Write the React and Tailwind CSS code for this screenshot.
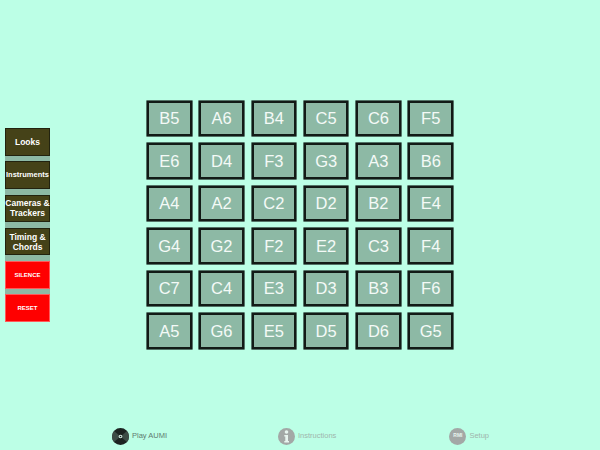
import React from "react";

const rows = [
  ["B5", "A6", "B4", "C5", "C6", "F5"],
  ["E6", "D4", "F3", "G3", "A3", "B6"],
  ["A4", "A2", "C2", "D2", "B2", "E4"],
  ["G4", "G2", "F2", "E2", "C3", "F4"],
  ["C7", "C4", "E3", "D3", "B3", "F6"],
  ["A5", "G6", "E5", "D5", "D6", "G5"],
];

const SideButton = ({ children, red, size = "text-[8.5px]" }) => (
  <button
    className={`w-full h-[27.5px] flex items-center justify-center text-center font-bold text-white leading-[10px] whitespace-nowrap border-[0.5px] ${size} ${
      red ? "bg-[#ff0000] border-[#ff5a5a]" : "bg-[#454218] border-[#22230f]"
    }`}
  >
    <span>{children}</span>
  </button>
);

const DiscIcon = () => (
  <svg width="17" height="17" viewBox="0 0 17 17">
    <circle cx="8.5" cy="8.5" r="8.5" fill="#1c2421" />
    <path d="M8.5 8.5 L2 3 A8.5 8.5 0 0 0 2 14 Z" fill="#3d4d46" />
    <path d="M8.5 8.5 L15 3 A8.5 8.5 0 0 1 15 14 Z" fill="#3d4d46" />
    <circle cx="8.5" cy="8.5" r="1.8" fill="#d8efe5" />
    <circle cx="8.5" cy="8.5" r="0.8" fill="#1c2421" />
  </svg>
);

const InfoIcon = () => (
  <svg width="17" height="17" viewBox="0 0 17 17">
    <circle cx="8.5" cy="8.5" r="8.5" fill="#a3a8a6" />
    <circle cx="8.5" cy="4" r="1.8" fill="#e8f5ef" />
    <path d="M6.3 7 H10 V13 H11 V14.5 H6.3 V13 H7.3 V8.5 H6.3 Z" fill="#e8f5ef" />
  </svg>
);

const App = () => {
  return (
    <div className="w-[600px] h-[450px] flex flex-col bg-[#bcffe6] overflow-hidden font-['Liberation_Sans',sans-serif]">
      <div className="flex h-[423px]">
        {/* side menu */}
        <div className="ml-[5px] mt-[128px] w-[45px] h-[194px] flex flex-col justify-between bg-[#8db9a5]">
          <SideButton>Looks</SideButton>
          <SideButton size="text-[7.5px]">Instruments</SideButton>
          <SideButton>
            Cameras &amp;
            <br />
            Trackers
          </SideButton>
          <SideButton>
            Timing &amp;
            <br />
            Chords
          </SideButton>
          <SideButton red size="text-[6px]">SILENCE</SideButton>
          <SideButton red size="text-[6px]">RESET</SideButton>
        </div>

        {/* note grid */}
        <div className="ml-[97px] mt-[100.5px] w-[306px] h-[248.5px] grid grid-cols-6 grid-rows-6 gap-x-[7.8px] gap-y-[6.9px]">
          {rows.flat().map((note) => (
            <button
              key={note}
              className="border-2 border-[#121a16] shadow-[0_0_0_0.6px_#121a16] bg-[#8db9a5] flex items-center justify-center text-[#f4faf7] text-[16.5px]"
            >
              {note}
            </button>
          ))}
        </div>
      </div>

      {/* tab bar */}
      <div className="flex items-center h-[27px] text-[7.5px] pb-[1px]">
        <div className="ml-[112px] flex items-center gap-[3px] text-[#5f7a70]">
          <DiscIcon />
          <span>Play AUMI</span>
        </div>
        <div className="ml-[111px] flex items-center gap-[3px] text-[#9fb5ac]">
          <InfoIcon />
          <span>Instructions</span>
        </div>
        <div className="ml-[113px] flex items-center gap-[3px] text-[#9fb5ac]">
          <div className="w-[17px] h-[17px] rounded-full bg-[#a3a8a6] flex items-center justify-center text-[5px] font-bold text-[#e8f5ef]">
            RMI
          </div>
          <span>Setup</span>
        </div>
      </div>
    </div>
  );
};

export default App;
